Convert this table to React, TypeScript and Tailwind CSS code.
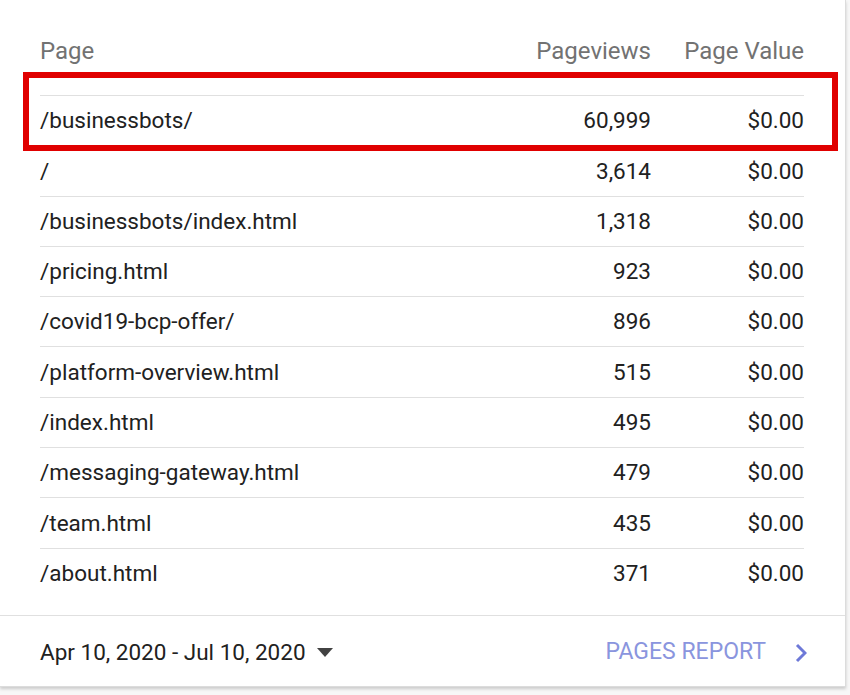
import React from 'react';

const rows = [
  { page: '/businessbots/', views: '60,999', value: '$0.00' },
  { page: '/', views: '3,614', value: '$0.00' },
  { page: '/businessbots/index.html', views: '1,318', value: '$0.00' },
  { page: '/pricing.html', views: '923', value: '$0.00' },
  { page: '/covid19-bcp-offer/', views: '896', value: '$0.00' },
  { page: '/platform-overview.html', views: '515', value: '$0.00' },
  { page: '/index.html', views: '495', value: '$0.00' },
  { page: '/messaging-gateway.html', views: '479', value: '$0.00' },
  { page: '/team.html', views: '435', value: '$0.00' },
  { page: '/about.html', views: '371', value: '$0.00' },
];

const App = () => {
  return (
    <div className="w-[850px] h-[695px] bg-[#f7f7f7] font-['Roboto',sans-serif] overflow-hidden">
      <div className="relative w-[846px] h-[687px] bg-white border-r border-b border-[#dcdcdc] shadow-[0_2px_3px_rgba(0,0,0,0.18)]">
        {/* header */}
        <div className="flex items-center h-[95px] pl-[40px] pr-[41px] pt-[6px] text-[24px] text-[#727272]">
          <div className="flex-1">Page</div>
          <div className="w-[160px] text-right">Pageviews</div>
          <div className="w-[153px] text-right">Page Value</div>
        </div>

        {/* rows */}
        <div className="ml-[40px] mr-[41px]">
          {rows.map((r, i) => (
            <div key={i} className="flex items-center h-[50.3px] border-t border-[#e0e0e0] pt-[1px] text-[22.5px] text-[#212121]">
              <div className="flex-1">{r.page}</div>
              <div className="w-[160px] text-right">{r.views}</div>
              <div className="w-[153px] text-right">{r.value}</div>
            </div>
          ))}
        </div>

        {/* footer */}
        <div className="absolute left-0 right-0 bottom-0 h-[71px] border-t border-[#e0e0e0] flex items-center pl-[40px] pr-[38px] pt-[3px]">
          <div className="flex items-center text-[22.5px] text-[#212121]">
            <span>Apr 10, 2020 - Jul 10, 2020</span>
            <svg width="16" height="9" viewBox="0 0 16 9" className="ml-[11px]">
              <path d="M0 0 L16 0 L8 9 Z" fill="#424242" />
            </svg>
          </div>
          <div className="flex-1" />
          <div className="flex items-center text-[23px] text-[#8a95de]">
            <span>PAGES REPORT</span>
            <svg width="12" height="20" viewBox="0 0 12 20" className="ml-[29px]">
              <path d="M2 2 L10 10 L2 18" fill="none" stroke="#6e79d8" strokeWidth="3" />
            </svg>
          </div>
        </div>

        {/* annotation */}
        <div className="absolute left-[23px] top-[72px] w-[815px] h-[79px] border-[6px] border-[#e00000]" />
      </div>
    </div>
  );
};

export default App;
